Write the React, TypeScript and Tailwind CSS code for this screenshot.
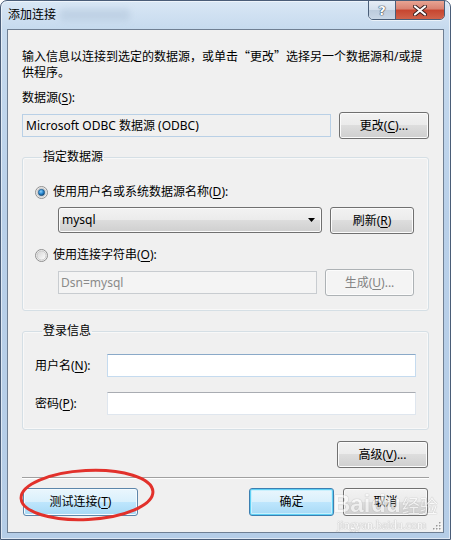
import React from "react";

const FONT = { fontFamily: '"Noto Sans", "Noto Sans CJK SC", sans-serif' };
const CJK = { fontFamily: '"Noto Sans CJK SC", sans-serif' };

const btnBase =
  "flex items-center justify-center h-full rounded-[3px] border text-[12px] leading-[16px] whitespace-nowrap";
const btnNormal =
  "border-[#707070] bg-[linear-gradient(to_bottom,#f2f2f2_0%,#ebebeb_49%,#dddddd_50%,#cfcfcf_100%)] shadow-[inset_0_0_0_1px_#fbfbfb] text-black";
const btnHover =
  "border-[#5d86aa] bg-[linear-gradient(to_bottom,#eaf6fd_0%,#d9f0fc_49%,#bee6fd_50%,#a7d9f5_100%)] shadow-[inset_0_0_0_1px_#f4fbff] text-black";
const btnDefault =
  "border-[#3c7fb1] bg-[linear-gradient(to_bottom,#eaf6fd_0%,#d9f0fc_49%,#bee6fd_50%,#a7d9f5_100%)] shadow-[inset_0_0_0_1px_#5fd0f5,inset_0_0_0_2px_#c9f0fd] text-black";
const btnDisabled =
  "border-[#adb2b5] bg-[#f4f4f4] shadow-[inset_0_0_0_1px_#fcfcfc] text-[#838383]";

function U({ children }: { children: React.ReactNode }) {
  return <span className="underline underline-offset-2">{children}</span>;
}

function Radio({ checked }: { checked?: boolean }) {
  return (
    <svg width="13" height="13" viewBox="0 0 13 13" className="shrink-0">
      <defs>
        <linearGradient id={checked ? "rg1" : "rg0"} x1="0" y1="0" x2="1" y2="1">
          <stop offset="0" stopColor="#d4d4d4" />
          <stop offset="1" stopColor="#ffffff" />
        </linearGradient>
        <radialGradient id="dot" cx="0.4" cy="0.35" r="0.7">
          <stop offset="0" stopColor="#8fd0f7" />
          <stop offset="0.5" stopColor="#2a8ad4" />
          <stop offset="1" stopColor="#0d3d66" />
        </radialGradient>
      </defs>
      <circle cx="6.5" cy="6.5" r="6" fill="#f2f2f2" stroke="#8f8f8f" strokeWidth="1" />
      <circle cx="6.5" cy="6.5" r="4.5" fill={`url(#${checked ? "rg1" : "rg0"})`} stroke="#c2c2c2" strokeWidth="0.8" />
      {checked && <circle cx="6.5" cy="6.5" r="3.2" fill="url(#dot)" stroke="#1b4f7a" strokeWidth="0.6" />}
    </svg>
  );
}

export default function App() {
  return (
    <div className="relative w-[451px] h-[540px] overflow-hidden bg-white" style={FONT}>
      <div className="w-full h-full flex flex-col rounded-t-[7px] border border-[#4a5d78] bg-[linear-gradient(to_bottom,#d9e7f5_0px,#c6daee_28px,#b9d0e9_40%,#b5cde7_100%)] shadow-[inset_0_0_0_1px_rgba(255,255,255,0.55)]">
        {/* Title bar */}
        <div className="h-[28px] flex items-start shrink-0">
          <div className="pl-[7px] pt-[6px] text-[12px] leading-[16px] text-black">添加连接</div>
          <div className="ml-[4px] mt-[8px] h-[12px] w-[70px] rounded bg-[#b9cce0] blur-[3px] opacity-70" />
          <div className="ml-auto mr-[5px] -mt-[1px] flex h-[20px] rounded-b-[5px] border border-[#4a5e78] overflow-hidden shadow-[0_1px_0_rgba(255,255,255,0.6)]">
            <div className="w-[27px] h-full flex items-center justify-center bg-[linear-gradient(to_bottom,#e6edf5_0%,#d3dfec_50%,#bccbdc_51%,#c9d7e6_100%)] border-r border-[#4a5e78]">
              <span className="text-white font-bold text-[13px] leading-none [text-shadow:0_0_1px_#2a3a4e,0_0_1px_#2a3a4e,0_0_1px_#2a3a4e]" style={{ fontFamily: '"DejaVu Sans", sans-serif' }}>?</span>
            </div>
            <div className="w-[48px] h-full flex items-center justify-center bg-[linear-gradient(to_bottom,#e8a493_0%,#d98170_45%,#c7452f_50%,#d0634b_100%)]">
              <svg width="14" height="11" viewBox="0 0 14 11">
                <path d="M2 1.5 L12 9.5 M12 1.5 L2 9.5" stroke="#3a2020" strokeWidth="4" strokeLinecap="round" />
                <path d="M2 1.5 L12 9.5 M12 1.5 L2 9.5" stroke="#ffffff" strokeWidth="2.2" strokeLinecap="round" />
              </svg>
            </div>
          </div>
        </div>

        {/* Client area */}
        <div className="mx-[6px] mb-[6px] flex-1 border border-[#6f7f93] bg-[#f0f0f0] flex flex-col px-[14px] text-[12px] leading-[16px] text-black">
          <div className="mt-[19px] h-[32px] shrink-0 whitespace-nowrap overflow-visible">
            输入信息以连接到选定的数据源，或单击<span style={CJK} className="leading-none">“</span>更改<span style={CJK} className="leading-none">”</span>选择另一个数据源和/或提
            <br />
            供程序。
          </div>
          <div className="mt-[9px]">
            数据源(<U>S</U>):
          </div>
          <div className="mt-[6px] h-[27px] flex items-center gap-[8px]">
            <div className="flex-1 h-[23px] border border-[#b9d0e6] bg-[#f0f0f0] flex items-center pl-[3px] whitespace-nowrap">
              Microsoft ODBC 数据源 (ODBC)
            </div>
            <button className={`${btnBase} ${btnNormal} w-[90px]`}>
              更改(<U>C</U>)...
            </button>
          </div>

          {/* Group 1 */}
          <fieldset className="mt-[10px] border border-[#d5dfe5] rounded-[3px] shadow-[inset_0_0_0_1px_#ffffff80] pl-[12px] pr-[14px] pb-[14px]">
            <legend className="ml-[7px] px-[1px] leading-[16px]">指定数据源</legend>
            <div className="mt-[19px] h-[16px] flex items-center gap-[5px]">
              <Radio checked />
              <span>
                使用用户名或系统数据源名称(<U>D</U>):
              </span>
            </div>
            <div className="mt-[7px] ml-[23px] h-[27px] flex items-center gap-[8px]">
              <div className="flex-1 h-[26px] self-start rounded-[3px] border border-[#707070] bg-[linear-gradient(to_bottom,#f2f2f2_0%,#ebebeb_49%,#dddddd_50%,#cfcfcf_100%)] shadow-[inset_0_0_0_1px_#fbfbfb] flex items-center pl-[3px] pr-[6px]">
                <span className="flex-1">mysql</span>
                <svg width="7" height="4" viewBox="0 0 7 4">
                  <path d="M0 0 H7 L3.5 4 Z" fill="#000" />
                </svg>
              </div>
              <button className={`${btnBase} ${btnNormal} w-[84px]`}>
                刷新(<U>R</U>)
              </button>
            </div>
            <div className="mt-[13px] h-[16px] flex items-center gap-[5px]">
              <Radio />
              <span>
                使用连接字符串(<U>O</U>):
              </span>
            </div>
            <div className="mt-[6px] ml-[23px] h-[27px] flex items-center gap-[8px]">
              <div className="flex-1 h-[23px] border border-[#c8ccd0] bg-[#f4f4f4] flex items-center pl-[2px] text-[#8a8a8a]">
                Dsn=mysql
              </div>
              <button className={`${btnBase} ${btnDisabled} w-[89px]`}>
                生成(<U>U</U>)...
              </button>
            </div>
          </fieldset>

          {/* Group 2 */}
          <fieldset className="mt-[12px] border border-[#d5dfe5] rounded-[3px] shadow-[inset_0_0_0_1px_#ffffff80] pl-[12px] pr-[12px] pb-[14px]">
            <legend className="ml-[7px] px-[1px] leading-[16px]">登录信息</legend>
            <div className="mt-[15px] h-[23px] flex items-center">
              <span className="w-[72px] shrink-0">
                用户名(<U>N</U>):
              </span>
              <div className="flex-1 h-[23px] border border-[#c5dbef] border-t-[#8aa9c8] bg-white" />
            </div>
            <div className="mt-[15px] h-[23px] flex items-center">
              <span className="w-[72px] shrink-0">
                密码(<U>P</U>):
              </span>
              <div className="flex-1 h-[23px] border border-[#dfe6ee] border-t-[#a9acb2] bg-white" />
            </div>
          </fieldset>

          <div className="mt-[11px] h-[27px] flex justify-end mr-[1px]">
            <button className={`${btnBase} ${btnNormal} w-[91px]`}>
              高级(<U>V</U>)...
            </button>
          </div>

          <div className="mt-[9px] h-px bg-[#a0a0a0]" />
          <div className="h-px bg-white" />

          <div className="mt-[9px] h-[28px] flex items-center gap-[9px]">
            <button className={`${btnBase} ${btnHover} w-[115px] ml-[1px]`}>
              测试连接(<U>T</U>)
            </button>
            <div className="flex-1" />
            <button className={`${btnBase} ${btnDefault} w-[85px]`}>确定</button>
            <button className={`${btnBase} ${btnNormal} w-[85px] mr-[1px]`}>取消</button>
          </div>
        </div>
      </div>

      {/* Baidu watermark */}
      <div className="absolute left-[333px] top-[492px] pointer-events-none flex items-end gap-[1px] opacity-60">
        <span className="text-[24px] leading-[24px] font-bold text-white [text-shadow:0_0_1px_#9a9a9a,0_0_1px_#9a9a9a]" style={{ fontFamily: '"Liberation Sans", sans-serif' }}>
          Bai
        </span>
        <span className="text-[24px] leading-[24px] font-bold text-white [text-shadow:0_0_1px_#9a9a9a,0_0_1px_#9a9a9a]" style={{ fontFamily: '"Liberation Sans", sans-serif' }}>
          du
        </span>
        <span className="text-[18px] leading-[22px] text-white [text-shadow:0_0_1px_#9a9a9a,0_0_1px_#9a9a9a]" style={CJK}>
          经验
        </span>
      </div>
      <div className="absolute left-[337px] top-[519px] pointer-events-none text-[12px] leading-[12px] text-white opacity-80 [text-shadow:0_0_1px_#a0a0a0,0_0_1px_#a0a0a0]" style={{ fontFamily: '"Liberation Serif", serif' }}>
        jingyan.baidu.com
      </div>

      {/* Resize grip */}
      <svg className="absolute left-[432px] top-[521px]" width="10" height="10" viewBox="0 0 10 10">
        {[
          [8, 2],
          [5, 5],
          [8, 5],
          [2, 8],
          [5, 8],
          [8, 8],
        ].map(([x, y], i) => (
          <g key={i}>
            <rect x={x} y={y} width="1.5" height="1.5" fill="#ffffff" />
            <rect x={x - 1} y={y - 1} width="1.5" height="1.5" fill="#9a9a9a" />
          </g>
        ))}
      </svg>

      {/* Red annotation ellipse */}
      <svg className="absolute left-0 top-0 pointer-events-none" width="451" height="540" viewBox="0 0 451 540">
        <ellipse cx="87" cy="495" rx="66" ry="24.5" transform="rotate(-3 87 495)" fill="none" stroke="#e2312b" strokeWidth="3" />
      </svg>
    </div>
  );
}
